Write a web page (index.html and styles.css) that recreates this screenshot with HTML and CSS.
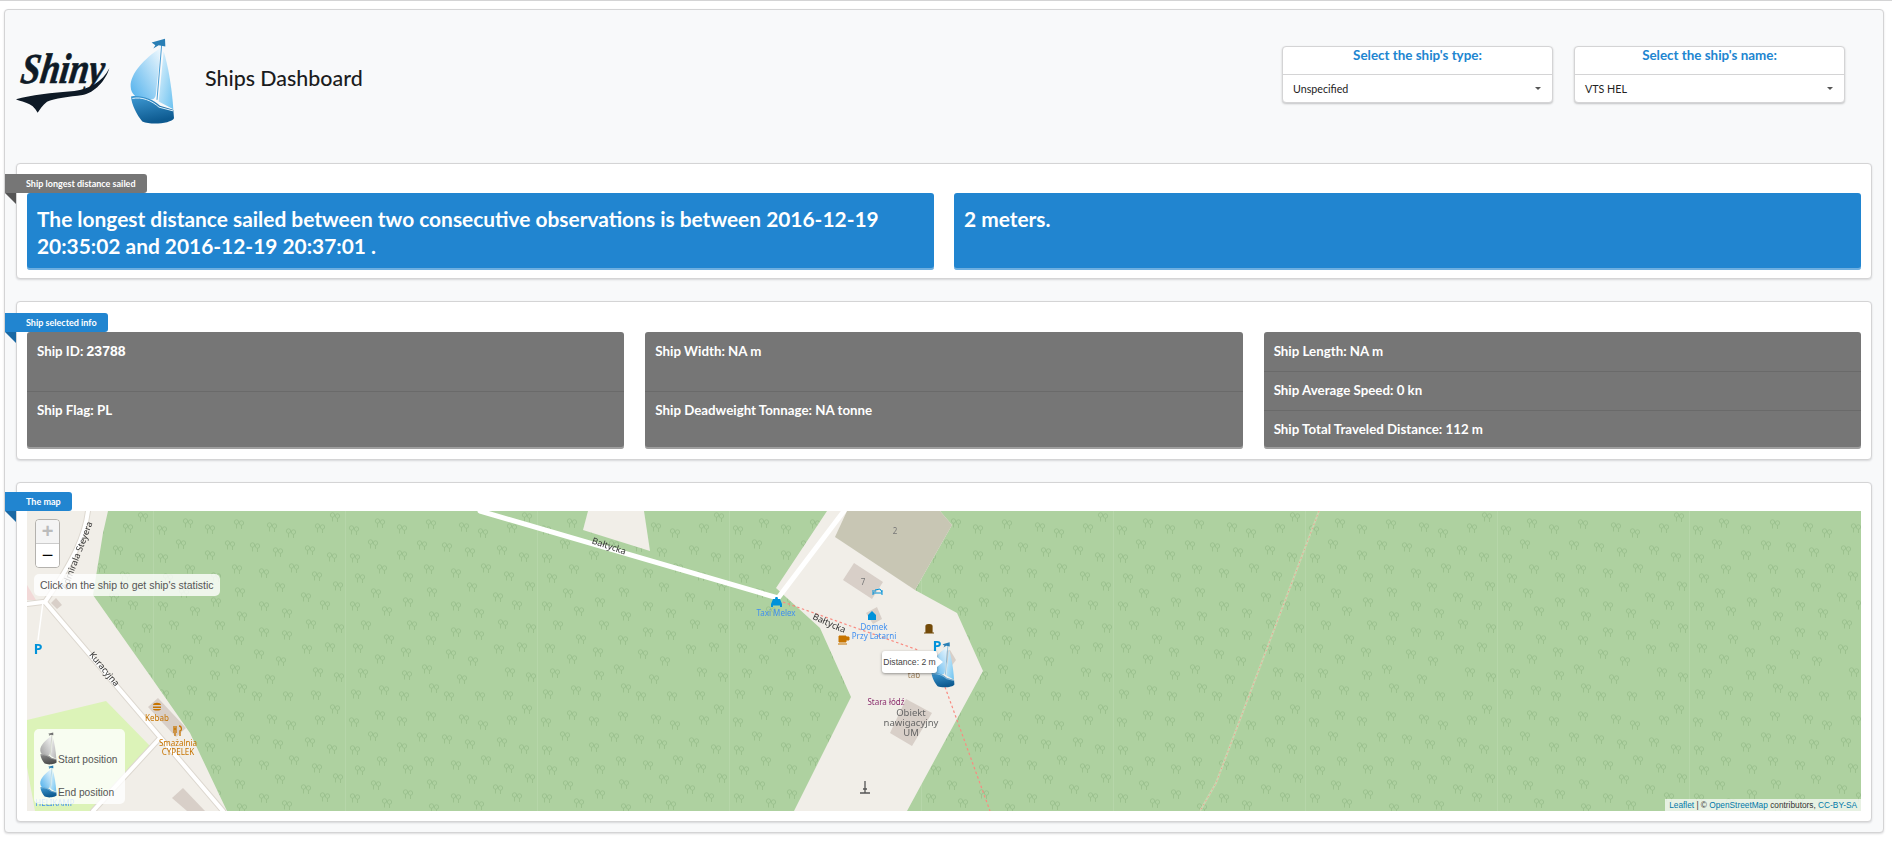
FILE: index.html
```html
<!DOCTYPE html>
<html lang="en">
<head>
    <meta charset="UTF-8">
    <meta name="viewport" content="width=device-width, initial-scale=1.0">
    <title>Ships Dashboard</title>
    <link rel="stylesheet" href="styles.css">
</head>
<body>
    <svg class="defs" width="0" height="0" aria-hidden="true">
        <defs>
            <linearGradient id="sail-left" x1="1" y1="0" x2="0" y2="1">
                <stop offset="0" stop-color="#eef8fe"/>
                <stop offset="1" stop-color="#4fb0ec"/>
            </linearGradient>
            <linearGradient id="sail-right" x1="0" y1="0" x2="1" y2="1">
                <stop offset="0" stop-color="#e4f4fd"/>
                <stop offset="1" stop-color="#6cc2f0"/>
            </linearGradient>
            <linearGradient id="hull" x1="0" y1="0" x2="0.3" y2="1">
                <stop offset="0" stop-color="#3f9ad4"/>
                <stop offset="1" stop-color="#0d5a90"/>
            </linearGradient>
            <symbol id="ship" viewBox="355 25 135 260">
                <path d="M445 55C400 85 355 130 357 170C358 195 375 205 395 205C415 205 430 218 433 190C438 140 445 90 445 55Z" fill="url(#sail-left)"/>
                <path d="M456 65L441 215L485 238C480 170 470 110 456 65Z" fill="url(#sail-right)"/>
                <path d="M450 45L436 210" stroke="#4a9fd6" stroke-width="3" fill="none"/>
                <path d="M420 38L460 27L461 50L441 46L425 56L431 46Z" fill="#2a7fb5"/>
                <path d="M358 200C385 195 420 205 445 228L485 240L487 265C480 280 420 287 392 275C375 255 360 225 358 200Z" fill="url(#hull)"/>
                <path d="M362 206C390 200 420 212 442 232L484 243" stroke="#dff2fd" stroke-width="3" fill="none"/>
            </symbol>
            <g id="tree" fill="none" stroke="#9ac08c" stroke-width=".9">
                <path d="M-2.500 4.500V0"/>
                <circle cx="-2.500" cy="-2" r="2.200"/>
                <path d="M2.500 5V1"/>
                <circle cx="2.500" cy="-1" r="2.200"/>
            </g>
            <pattern id="forest" patternUnits="userSpaceOnUse" x="1113" y="511" width="192" height="192">
                <rect width="192" height="192" fill="#aed1a0"/>
                <path d="M.5 0V192" stroke="#b6d6a9" stroke-width="1"/>
                <use href="#tree" x="35" y="12"/><use href="#tree" x="9" y="19"/><use href="#tree" x="57" y="18"/><use href="#tree" x="86" y="13"/>
                <use href="#tree" x="119" y="16"/><use href="#tree" x="138" y="22"/><use href="#tree" x="167" y="17"/><use href="#tree" x="182" y="6"/>
                <use href="#tree" x="28" y="33"/><use href="#tree" x="10" y="47"/><use href="#tree" x="57" y="44"/><use href="#tree" x="77" y="34"/>
                <use href="#tree" x="102" y="36"/><use href="#tree" x="125" y="41"/><use href="#tree" x="157" y="39"/><use href="#tree" x="179" y="46"/>
                <use href="#tree" x="37" y="58"/><use href="#tree" x="15" y="67"/><use href="#tree" x="63" y="66"/><use href="#tree" x="84" y="58"/>
                <use href="#tree" x="111" y="62"/><use href="#tree" x="141" y="57"/><use href="#tree" x="164" y="65"/><use href="#tree" x="185" y="75"/>
                <use href="#tree" x="31" y="82"/><use href="#tree" x="87" y="81"/><use href="#tree" x="127" y="76"/><use href="#tree" x="153" y="86"/>
                <use href="#tree" x="10" y="95"/><use href="#tree" x="42" y="100"/><use href="#tree" x="63" y="91"/><use href="#tree" x="111" y="95"/>
                <use href="#tree" x="134" y="102"/><use href="#tree" x="172" y="94"/><use href="#tree" x="89" y="105"/><use href="#tree" x="21" y="114"/>
                <use href="#tree" x="67" y="114"/><use href="#tree" x="158" y="113"/><use href="#tree" x="186" y="117"/><use href="#tree" x="44" y="128"/>
                <use href="#tree" x="86" y="129"/><use href="#tree" x="111" y="121"/><use href="#tree" x="134" y="124"/><use href="#tree" x="13" y="137"/>
                <use href="#tree" x="61" y="141"/><use href="#tree" x="106" y="143"/><use href="#tree" x="154" y="138"/><use href="#tree" x="177" y="136"/>
                <use href="#tree" x="35" y="148"/><use href="#tree" x="128" y="150"/><use href="#tree" x="18" y="162"/><use href="#tree" x="62" y="164"/>
                <use href="#tree" x="82" y="158"/><use href="#tree" x="117" y="168"/><use href="#tree" x="165" y="161"/><use href="#tree" x="186" y="166"/>
                <use href="#tree" x="11" y="183"/><use href="#tree" x="39" y="179"/><use href="#tree" x="89" y="177"/><use href="#tree" x="163" y="184"/>
                <use href="#tree" x="59" y="185"/><use href="#tree" x="104" y="185"/><use href="#tree" x="135" y="185"/>
            </pattern>
        </defs>
    </svg>

    <div class="page">
        <div class="header">
            <div class="brand">
                <svg class="shiny-logo" viewBox="0 0 300 300">
                    <text class="shiny-word" transform="skewX(-8)" x="48" y="160" textLength="250" lengthAdjust="spacingAndGlyphs">Shiny</text>
                    <path d="M15 208C60 195 120 188 190 183C235 178 275 155 295 115C285 150 250 190 215 195C175 200 130 205 108 215C95 225 85 240 80 248C72 232 60 222 45 218C30 213 20 212 15 208Z" fill="#0e1a26"/>
                </svg>
                <svg class="ship-logo"><use href="#ship"/></svg>
                <h1 class="title">Ships Dashboard</h1>
            </div>
            <div class="selects">
                <div class="select-box">
                    <div class="select-title">Select the ship's type:</div>
                    <div class="select-value">Unspecified<span class="caret"></span></div>
                </div>
                <div class="select-box">
                    <div class="select-title">Select the ship's name:</div>
                    <div class="select-value">VTS HEL<span class="caret"></span></div>
                </div>
            </div>
        </div>

        <div class="segment segment-longest">
            <div class="ribbon ribbon-grey">Ship longest distance sailed</div>
            <div class="two-col">
                <div class="panel-blue">The longest distance sailed between two consecutive observations is between 2016-12-19 20:35:02 and 2016-12-19 20:37:01 .</div>
                <div class="panel-blue">2 meters.</div>
            </div>
        </div>

        <div class="segment segment-info">
            <div class="ribbon ribbon-blue">Ship selected info</div>
            <div class="three-col">
                <div class="panel-grey">
                    <div class="info-row">Ship ID: <span class="ship-id">23788</span></div>
                    <div class="info-row">Ship Flag: PL</div>
                </div>
                <div class="panel-grey">
                    <div class="info-row">Ship Width: NA m</div>
                    <div class="info-row">Ship Deadweight Tonnage: NA tonne</div>
                </div>
                <div class="panel-grey">
                    <div class="info-row">Ship Length: NA m</div>
                    <div class="info-row">Ship Average Speed: 0 kn</div>
                    <div class="info-row">Ship Total Traveled Distance: 112 m</div>
                </div>
            </div>
        </div>

        <div class="segment segment-map">
            <div class="ribbon ribbon-blue">The map</div>
            <div class="map">
                <svg class="map-canvas" viewBox="27 511 1834 300">
                    <g class="map-tiles">
                        <rect x="27" y="511" width="1834" height="300" fill="url(#forest)"/>
                        <!-- land left -->
                        <path d="M27 511H108L103 533L93 595L153 680L190 733L227 811H27Z" fill="#f1eee8"/>
                        <path d="M27 720L106 701L151 747L93 811H35L27 767Z" fill="#dcf3b8"/>
                        <path d="M148 707L158 698L186 728L176 737Z" fill="#d8cfc8"/>
                        <path d="M172 798L183 788L205 811H187Z" fill="#d8cfc8"/>
                        <path d="M51 603L56 598L62 605L57 609Z" fill="#d8cfc8"/>
                        <path d="M27 585L36 600H27Z" fill="#f2d9d8"/>
                        <!-- land middle -->
                        <path d="M588 511L583 530L650 551L644 511Z" fill="#f1eee8"/>
                        <path d="M827 511L776 588L820 628L851 697L794 811H907L983 671L957 613L915 590L952 525L940 511Z" fill="#f1eee8"/>
                        <path d="M847 511H940L952 525L915 590L835 537Z" fill="#c8c6b4"/>
                        <path d="M843 580L854 563L883 582L872 599Z" fill="#d8cfc8"/>
                        <path d="M866 613L877 607L882 619L873 624Z" fill="#d8cfc8"/>
                        <path d="M906 699L932 713L912 746L890 733Z" fill="#d8cfc8"/>
                        <path d="M940 652L950 650L956 660L950 668Z" fill="#d8cfc8"/>
                        <!-- roads -->
                        <g fill="none" stroke-linecap="round">
                            <path class="road-case" d="M88 511C85 535 74 560 45 602L223 811M43 602L27 604M160 738L93 811"/>
                            <path class="road-fill" d="M88 511C85 535 74 560 45 602L223 811M43 602L27 604M160 738L93 811"/>
                            <path class="road-thin" d="M43 602L38 640"/>
                            <path d="M480 511L778 598L844 511" stroke="#fff" stroke-width="5"/>
                        </g>
                        <!-- forest track -->
                        <path class="track-base" d="M1319 511L1216 783L1200 811"/>
                        <path class="track-dash track-forest" d="M1319 511L1216 783L1200 811"/>
                        <path class="track-dash" d="M783 602L918 650M945 687L990 811"/>
                        <!-- labels -->
                        <text class="lbl-road" transform="translate(608 549) rotate(19)" text-anchor="middle">Bałtycka</text>
                        <text class="lbl-road" transform="translate(828 626) rotate(24)" text-anchor="middle">Bałtycka</text>
                        <text class="lbl-road" transform="translate(102 671) rotate(50)" text-anchor="middle">Kuracyjna</text>
                        <text class="lbl-road" transform="translate(67 590) rotate(-69)">Admirala Steyera</text>
                        <text class="lbl-blue" x="776" y="616" text-anchor="middle">Taxi Melex</text>
                        <text class="lbl-blue" x="874" y="630" text-anchor="middle">Domek</text>
                        <text class="lbl-blue" x="874" y="639" text-anchor="middle">Przy Latarni</text>
                        <text class="lbl-blue" x="55" y="806" text-anchor="middle">HELIKAMP</text>
                        <text class="lbl-num" x="863" y="585" text-anchor="middle">7</text>
                        <text class="lbl-num" x="895" y="534" text-anchor="middle">2</text>
                        <text class="lbl-brown" x="914" y="678" text-anchor="middle">tab</text>
                        <text class="lbl-purple" x="886" y="705" text-anchor="middle">Stara łódź</text>
                        <text class="lbl-grey" x="911" y="716" text-anchor="middle">Obiekt</text>
                        <text class="lbl-grey" x="911" y="726" text-anchor="middle">nawigacyjny</text>
                        <text class="lbl-grey" x="911" y="736" text-anchor="middle">UM</text>
                        <text class="lbl-orange" x="157" y="721" text-anchor="middle">Kebab</text>
                        <text class="lbl-orange" x="178" y="746" text-anchor="middle">Smażalnia</text>
                        <text class="lbl-orange" x="178" y="755" text-anchor="middle">CYPELEK</text>
                        <text class="lbl-p" x="38" y="654" text-anchor="middle">P</text>
                        <text class="lbl-p" x="937" y="651" text-anchor="middle">P</text>
                        <!-- poi icons -->
                        <path d="M771 604L773 599H775L775.500 597H777.500L778 599H780L782 604V607H780V605.500H773V607H771Z" fill="#0092da"/>
                        <path d="M873 590V595M882 590V595M873 593H882M875 592V590L880 589L882 592" stroke="#0092da" stroke-width="1" fill="none"/>
                        <path d="M872 611L876 615V620H868V615Z" fill="#0092da"/>
                        <path d="M839 636H846V642H839ZM846 637H849V640H846ZM838 644H847" stroke="#c77400" stroke-width="1" fill="#c77400"/>
                        <path d="M926 632V626C926 624 932 624 932 626V632ZM924 633H934" stroke="#734a08" stroke-width="1.200" fill="#734a08"/>
                        <path d="M865 781V793M860 793H870M863 789H867" stroke="#555" stroke-width="1.300" fill="none"/>
                        <path d="M153 705C153 702 161 702 161 705ZM153 706.500H161V708H153ZM153 709H161C161 711 153 711 153 709Z" fill="#c77400"/>
                        <path d="M174 726V733M176 726V733M174 729H176M179 726C182 726 182 731 180 731V736M175 733V736" stroke="#c77400" stroke-width="1.300" fill="none"/>
                    </g>
                </svg>
                <svg class="ship-marker"><use href="#ship"/></svg>

                <div class="zoom-control">
                    <div class="zoom-btn zoom-off">+</div>
                    <div class="zoom-btn">−</div>
                </div>
                <div class="map-hint">Click on the ship to get ship's statistic</div>
                <div class="map-legend">
                    <div class="legend-row"><svg class="legend-ship ship-grey"><use href="#ship"/></svg>Start position</div>
                    <div class="legend-row"><svg class="legend-ship"><use href="#ship"/></svg>End position</div>
                </div>
                <div class="distance-tip">Distance: 2 m</div>
                <div class="attribution"><a href="#">Leaflet</a> | © <a href="#">OpenStreetMap</a> contributors, <a href="#">CC-BY-SA</a></div>
            </div>
        </div>
    </div>
</body>
</html>
```
FILE: styles.css
```css
body {
    margin: 0;
    padding: 0;
    font-family: Lato, "Liberation Sans", sans-serif;
    background: #fff;
    border-top: 1px solid #d4d4d5;
}
.defs {
    position: absolute;
}
.page {
    margin: 8px 8px 14px 4px;
    padding: 0 11px 10px 11px;
    background: #f8f9fa;
    border: 1px solid #d4d4d5;
    border-radius: 4px;
    box-shadow: 0 1px 2px rgba(34, 36, 38, 0.15);
}

/* header */
.header {
    display: flex;
    justify-content: space-between;
    height: 153px;
    padding-top: 36px;
    box-sizing: border-box;
}
.brand {
    display: flex;
    align-items: flex-start;
}
.shiny-logo {
    width: 100px;
    height: 100px;
    margin: -16px 19px 0 -5px;
    overflow: visible;
}
.shiny-word {
    font-family: "Liberation Serif", serif;
    font-style: italic;
    font-weight: bold;
    font-size: 128px;
    fill: #0e1a26;
    stroke: #0e1a26;
    stroke-width: 2;
}
.ship-logo {
    width: 45px;
    height: 87px;
    margin-top: -8px;
}
.title {
    margin: 20px 0 0 30px;
    font-size: 21.4px;
    font-weight: 500;
    line-height: 24px;
    color: #1b1c1d;
}
.selects {
    display: flex;
    gap: 21px;
    margin-right: 27px;
}
.select-box {
    width: 271px;
    height: 57px;
    box-sizing: border-box;
    background: #fff;
    border: 1px solid #d4d4d5;
    border-radius: 4px;
    box-shadow: 0 1px 2px rgba(34, 36, 38, 0.25);
}
.select-title {
    height: 28px;
    box-sizing: border-box;
    text-align: center;
    font-size: 13.4px;
    line-height: 17px;
    font-weight: 700;
    color: #2185d0;
    border-bottom: 1px solid #d4d4d5;
}
.select-value {
    display: flex;
    justify-content: space-between;
    align-items: center;
    height: 27px;
    padding: 0 10px;
    font-size: 10.7px;
    color: #222;
}
.caret {
    width: 0;
    height: 0;
    margin-right: 1px;
    border-left: 3px solid transparent;
    border-right: 3px solid transparent;
    border-top: 3px solid #555;
}

/* segments */
.segment {
    position: relative;
    margin-bottom: 22px;
    padding: 29px 10px 8px 10px;
    background: #fff;
    border: 1px solid #d4d4d5;
    border-radius: 4px;
    box-shadow: 0 1px 2px rgba(34, 36, 38, 0.15);
}
.segment:last-child {
    margin-bottom: 0;
}
.segment-info {
    padding-top: 30px;
    padding-bottom: 10px;
}
.segment-map {
    padding-top: 28px;
    padding-bottom: 10px;
}
.ribbon {
    position: absolute;
    left: -12px;
    top: 10px;
    height: 19px;
    padding: 0 11px 0 21px;
    line-height: 19px;
    font-size: 9px;
    font-weight: 700;
    color: #fff;
    border-radius: 0 3px 3px 0;
}
.segment-info .ribbon {
    top: 11px;
}
.segment-map .ribbon {
    top: 9px;
}
.ribbon::after {
    content: "";
    position: absolute;
    left: 0;
    top: 19px;
    border-top: 11px solid;
    border-left: 11px solid transparent;
}
.ribbon-grey {
    background: #767676;
}
.ribbon-grey::after {
    border-top-color: #555;
}
.ribbon-blue {
    background: #2185d0;
}
.ribbon-blue::after {
    border-top-color: #1a69a4;
}
.two-col {
    display: grid;
    grid-template-columns: 1fr 1fr;
    gap: 20px;
}
.three-col {
    display: grid;
    grid-template-columns: 1fr 1fr 1fr;
    gap: 21px;
}
.panel-blue {
    min-height: 54px;
    padding: 12px 10px 11px 10px;
    background: #2185d0;
    color: #fff;
    font-size: 20.9px;
    font-weight: 700;
    line-height: 27px;
    border-radius: 3px;
    box-shadow: inset 0 -2px 0 rgba(255, 255, 255, 0.35);
}
.panel-grey {
    display: flex;
    flex-direction: column;
    height: 117px;
    background: #767676;
    color: #fff;
    font-size: 13.3px;
    font-weight: 700;
    border-radius: 3px;
    box-shadow: inset 0 -2px 0 rgba(255, 255, 255, 0.3);
}
.info-row {
    flex: 1 1 0;
    padding: 11px 10px 0 10px;
    line-height: 17px;
}
.info-row + .info-row {
    padding-top: 10px;
    border-top: 1px solid rgba(0, 0, 0, 0.1);
}
.ship-id {
    font-size: 14px;
    font-family: "Liberation Sans", sans-serif;
}

/* map */
.map {
    position: relative;
    height: 300px;
    overflow: hidden;
}
.map-canvas {
    display: block;
    width: 100%;
    height: 300px;
}
.map-tiles {
    filter: blur(0.3px);
}
.road-case {
    stroke: #ddd8d0;
    stroke-width: 6;
}
.road-fill {
    stroke: #fff;
    stroke-width: 4;
}
.road-thin {
    stroke: #fff;
    stroke-width: 1.5;
}
.track-base {
    fill: none;
    stroke: #c6d8b0;
    stroke-width: 2;
}
.track-dash {
    fill: none;
    stroke: #fa8a80;
    stroke-width: 1.2;
    stroke-dasharray: 2.5 2.5;
}
.track-forest {
    stroke-width: 1;
    stroke-dasharray: 1.5 3;
    opacity: 0.75;
}
.map-canvas text {
    font-family: "Noto Sans", sans-serif;
    font-size: 8px;
}
.map-canvas .lbl-road {
    fill: #333;
    font-size: 9px;
}
.map-canvas .lbl-blue {
    fill: #3f8ff0;
}
.map-canvas .lbl-num {
    fill: #777;
}
.map-canvas .lbl-brown {
    fill: #a0835f;
}
.map-canvas .lbl-purple {
    fill: #8b2e6e;
}
.map-canvas .lbl-grey {
    fill: #666;
    font-size: 9.5px;
}
.map-canvas .lbl-orange {
    fill: #c77400;
}
.map-canvas .lbl-p {
    fill: #0092da;
    font-size: 14px;
    font-weight: 700;
}
.ship-marker {
    position: absolute;
    left: 904px;
    top: 131px;
    width: 24px;
    height: 46px;
}
.zoom-control {
    position: absolute;
    left: 8px;
    top: 8px;
    width: 25px;
    border: 1px solid rgba(0, 0, 0, 0.25);
    border-radius: 4px;
    box-sizing: border-box;
    overflow: hidden;
}
.zoom-btn {
    height: 23px;
    background: #fff;
    text-align: center;
    font: 20px/23px "Liberation Sans", sans-serif;
    color: #000;
}
.zoom-off {
    background: #f4f4f4;
    color: #bbb;
    font-weight: bold;
    border-bottom: 1px solid #ccc;
}
.map-hint,
.map-legend {
    position: absolute;
    left: 7px;
    background: rgba(255, 255, 255, 0.8);
    border-radius: 5px;
    font-family: "Liberation Sans", sans-serif;
    color: #555;
}
.map-hint {
    top: 63px;
    padding: 0 6px;
    line-height: 22px;
    font-size: 10.5px;
}
.map-legend {
    top: 218px;
    width: 91px;
    height: 75px;
    box-sizing: border-box;
    padding: 3px 6px;
    font-size: 10.2px;
}
.legend-row {
    display: flex;
    align-items: flex-end;
    height: 33px;
}
.legend-ship {
    width: 17px;
    height: 33px;
    margin-right: 1px;
}
.ship-grey {
    filter: grayscale(1);
}
.distance-tip {
    position: absolute;
    left: 855px;
    top: 140px;
    width: 55px;
    height: 22px;
    text-align: center;
    white-space: nowrap;
    background: #fff;
    border-radius: 3px;
    box-shadow: 0 1px 3px rgba(0, 0, 0, 0.4);
    font: 8.6px/22px "Liberation Sans", sans-serif;
    color: #444;
}
.distance-tip::after {
    content: "";
    position: absolute;
    left: 100%;
    top: 6px;
    border-top: 5px solid transparent;
    border-bottom: 5px solid transparent;
    border-left: 6px solid #fff;
}
.attribution {
    position: absolute;
    right: 0;
    bottom: 0;
    padding: 0 4px;
    background: rgba(255, 255, 255, 0.7);
    font: 8.3px/12px "Liberation Sans", sans-serif;
    color: #333;
}
.attribution a {
    color: #0078a8;
    text-decoration: none;
}
```
